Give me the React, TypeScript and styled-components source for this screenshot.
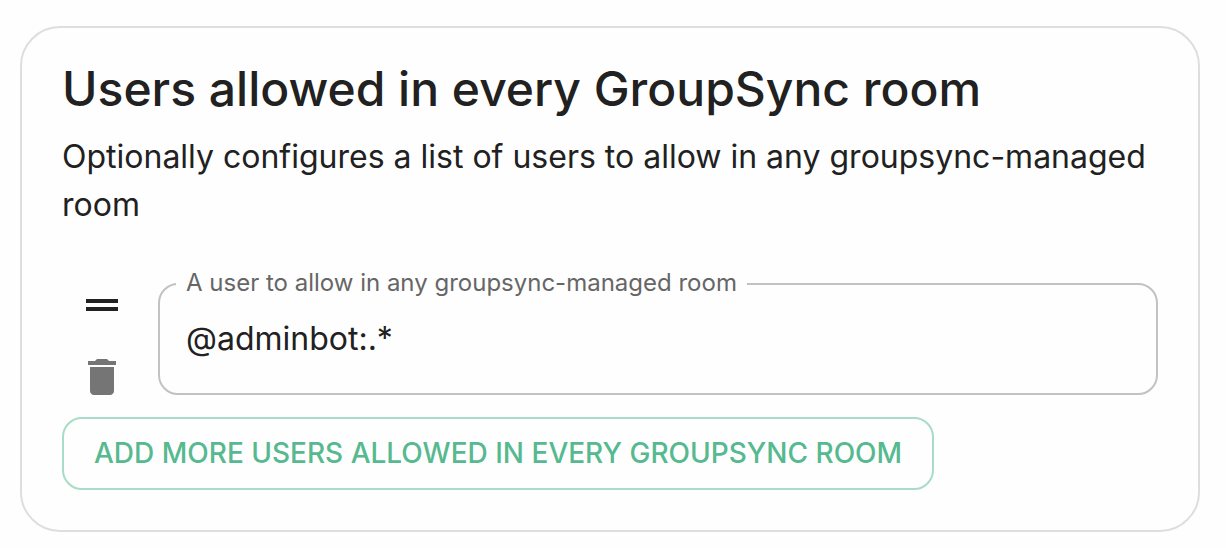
import React, { useState } from "react";
import styled, { createGlobalStyle } from "styled-components";

const GlobalStyle = createGlobalStyle`
  *, *::before, *::after { box-sizing: border-box; }
  body {
    margin: 0;
    background: #fefefe;
    color: #212121;
    font-family: Inter, "Liberation Sans", sans-serif;
    -webkit-font-smoothing: antialiased;
  }
`;

const Page = styled.main`
  padding: 26px 26px 16px 20px;
`;

const Card = styled.section`
  padding: 40px;
  border: 2px solid #dedede;
  border-radius: 40px;
`;

const Title = styled.h1`
  margin: 0 0 23px;
  font-size: 48px;
  font-weight: 500;
  line-height: 42px;
`;

const Description = styled.p`
  margin: 0;
  font-size: 32px;
  line-height: 48px;
`;

const Row = styled.div`
  display: flex;
  gap: 16px;
  margin-top: 36px;
`;

const Actions = styled.div`
  display: flex;
  flex: none;
  flex-direction: column;
`;

const IconButton = styled.button<{ $color: string; $grab?: boolean }>`
  display: flex;
  padding: ${(p) => (p.$grab ? "16px 16px 8px" : "16px")};
  border: 0;
  background: none;
  color: ${(p) => p.$color};
  cursor: ${(p) => (p.$grab ? "grab" : "pointer")};

  svg {
    width: 48px;
    height: 48px;
    fill: currentColor;
  }
`;

const Field = styled.fieldset`
  flex: 1;
  align-self: flex-start;
  min-width: 0;
  margin: 4px 0 0;
  padding: 0 16px;
  border: 2px solid #c2c2c2;
  border-radius: 20px;
`;

const Legend = styled.legend`
  padding: 0 10px 2px;
  color: #666666;
  font-size: 24px;
  line-height: 28px;
`;

const TextInput = styled.input`
  display: block;
  width: 100%;
  height: 94px;
  padding: 0 10px 16px;
  border: 0;
  outline: 0;
  background: none;
  color: inherit;
  font: inherit;
  font-size: 32px;
`;

const AddButton = styled.button`
  display: block;
  padding: 10px 30px;
  border: 2px solid #a8dcc6;
  border-radius: 20px;
  background: none;
  color: #56b98f;
  font-family: inherit;
  font-size: 28px;
  font-weight: 500;
  line-height: 49px;
  text-transform: uppercase;
  cursor: pointer;
`;

export default function App() {
  const [user, setUser] = useState("@adminbot:.*");

  return (
    <>
      <GlobalStyle />
      <Page>
        <Card>
          <Title>Users allowed in every GroupSync room</Title>
          <Description>
            Optionally configures a list of users to allow in any groupsync-managed room
          </Description>
          <Row>
            <Actions>
              <IconButton type="button" aria-label="Reorder" $color="#212121" $grab>
                <svg viewBox="0 0 24 24" aria-hidden="true">
                  <path d="M20 9H4v2h16V9zM4 15h16v-2H4v2z" />
                </svg>
              </IconButton>
              <IconButton type="button" aria-label="Delete" $color="#757575">
                <svg viewBox="0 0 24 24" aria-hidden="true">
                  <path d="M6 19c0 1.1.9 2 2 2h8c1.1 0 2-.9 2-2V7H6v12zM19 4h-3.5l-1-1h-5l-1 1H5v2h14V4z" />
                </svg>
              </IconButton>
            </Actions>
            <Field>
              <Legend>
                <label htmlFor="allowed-user">A user to allow in any groupsync-managed room</label>
              </Legend>
              <TextInput
                id="allowed-user"
                type="text"
                value={user}
                spellCheck={false}
                onChange={(e) => setUser(e.target.value)}
              />
            </Field>
          </Row>
          <AddButton type="button">Add more Users allowed in every GroupSync room</AddButton>
        </Card>
      </Page>
    </>
  );
}
